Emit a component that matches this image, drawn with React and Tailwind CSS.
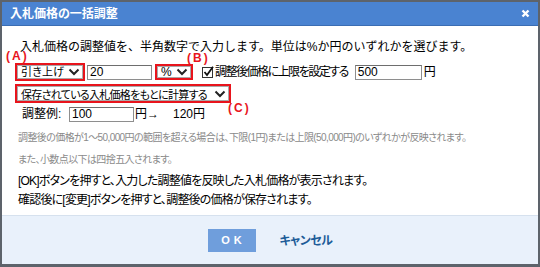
const JP = "font-['Liberation_Sans','Noto_Sans_CJK_JP',sans-serif]";

function Chevron() {
  return (
    <svg width="12" height="8" viewBox="0 0 12 8" className="shrink-0">
      <polyline points="1.5,1.5 6,6 10.5,1.5" fill="none" stroke="#222" strokeWidth="2" />
    </svg>
  );
}

function Select({ children, className = "" }) {
  return (
    <div className={`shrink-0 border-2 border-[#e8141c] ${className}`}>
      <div className="flex items-center justify-between gap-[2px] h-full border border-[#a9a9a9] bg-white pl-[3px] pr-[2px] overflow-hidden">
        <span className="min-w-0 leading-none whitespace-nowrap">{children}</span>
        <Chevron />
      </div>
    </div>
  );
}

function TextBox({ value, className = "" }) {
  return (
    <div className={`shrink-0 h-[15px] border border-[#8e8e8e] border-t-[#6e6e6e] bg-white px-[2px] text-[12px] leading-[13px] text-black ${className}`}>
      {value}
    </div>
  );
}

function Mark({ children, className = "" }) {
  return (
    <span className={`absolute text-[12px] font-bold leading-none tracking-[2px] text-[#e8141c] whitespace-nowrap ${className}`}>
      {children}
    </span>
  );
}

export default function App() {
  return (
    <div className={`${JP} w-[540px] h-[267px] bg-[#5d636b] pt-[2px] pl-[2px] pr-[2px] pb-[3px] flex`}>
      <div className="flex-1 flex flex-col bg-white">
        {/* Title */}
        <div className="h-[24px] shrink-0 bg-[#4a83d1] border-b border-[#3b6db3] flex items-center justify-between pl-[8px] pr-[8px]">
          <span className="text-[12px] font-bold text-white [font-feature-settings:'palt']">入札価格の一括調整</span>
          <svg width="9" height="9" viewBox="0 0 9 9">
            <path d="M1.5 1.5 L7.5 7.5 M7.5 1.5 L1.5 7.5" stroke="#fff" strokeWidth="2.4" />
          </svg>
        </div>

        {/* Body */}
        <div className="relative flex-1 pl-[16px] pt-[13px] text-black">
          <p className="text-[12px] leading-[16px] pl-[2px] whitespace-nowrap">
            入札価格の調整値を、半角数字で入力します。単位は%か円のいずれかを選びます。
          </p>

          <div className="mt-[8px] -ml-[3px] flex items-center h-[18px] text-[12px] whitespace-nowrap [font-feature-settings:'palt']">
            <Select className="w-[70px] h-[18px]">
              <span className="text-[11px] tracking-[0.2px]">引き上げ</span>
            </Select>
            <TextBox value="20" className="ml-[2px] w-[65px]" />
            <Select className="ml-[3px] w-[38px] h-[16px]">%</Select>
            <div className="ml-[9px] flex items-center">
              <svg width="12" height="12" viewBox="0 0 12 12" className="shrink-0">
                <rect x="0.5" y="1.5" width="10" height="10" fill="#fff" stroke="#333" />
                <polyline points="2.5,6 5,9 11,0.8" fill="none" stroke="#111" strokeWidth="1.8" />
              </svg>
              <span className="ml-[1px] tracking-[-1.5px]">調整後価格に上限を設定する</span>
            </div>
            <TextBox value="500" className="ml-[7px] w-[67px]" />
            <span className="ml-[2px]">円</span>
          </div>

          <div className="mt-[3px] -ml-[3px] flex [font-feature-settings:'palt']">
            <Select className="w-[216px] h-[19px]">
              <span className="text-[11px] tracking-[-0.7px]">保存されている入札価格をもとに計算する</span>
            </Select>
          </div>

          <div className="mt-[3px] pl-[4px] flex items-center text-[12px] h-[16px] whitespace-nowrap [font-feature-settings:'palt']">
            <span className="w-[47px]">調整例:</span>
            <TextBox value="100" className="w-[65px]" />
            <span className="ml-[1px]">円→</span>
            <span className="ml-[14px]">120円</span>
          </div>

          <p className="mt-[9px] text-[10px] leading-[14px] text-[#8a8a8a] tracking-[-0.6px] whitespace-nowrap [font-feature-settings:'palt']">
            調整後の価格が1～50,000円の範囲を超える場合は、下限(1円)または上限(50,000円)のいずれかが反映されます。
          </p>
          <p className="mt-[8px] text-[10px] leading-[14px] text-[#8a8a8a] tracking-[-0.6px] whitespace-nowrap [font-feature-settings:'palt']">
            また、小数点以下は四捨五入されます。
          </p>
          <p className="mt-[6px] text-[12px] leading-[16px] tracking-[-0.8px] whitespace-nowrap [font-feature-settings:'palt']">
            [OK]ボタンを押すと、入力した調整値を反映した入札価格が表示されます。
          </p>
          <p className="mt-[3px] text-[12px] leading-[16px] tracking-[-0.8px] whitespace-nowrap [font-feature-settings:'palt']">
            確認後に[変更]ボタンを押すと、調整後の価格が保存されます。
          </p>

          <Mark className="left-[4px] top-[24px]">(A)</Mark>
          <Mark className="left-[185px] top-[26px]">(B)</Mark>
          <Mark className="left-[226px] top-[76px]">(C)</Mark>
        </div>

        {/* Footer */}
        <div className="h-[49px] shrink-0 bg-[#e9f1fb] border-t border-[#d6e1ee] flex items-center justify-center gap-[24px] pt-[1px]">
          <button className="w-[48px] h-[23px] bg-[#6f9edc] text-white text-[11px] font-bold tracking-[4px] pl-[4px] font-['Liberation_Sans',sans-serif]">
            OK
          </button>
          <span className="text-[12px] font-bold text-[#1d5c98] [font-feature-settings:'palt'] tracking-[-0.5px]">キャンセル</span>
        </div>
      </div>
    </div>
  );
}
